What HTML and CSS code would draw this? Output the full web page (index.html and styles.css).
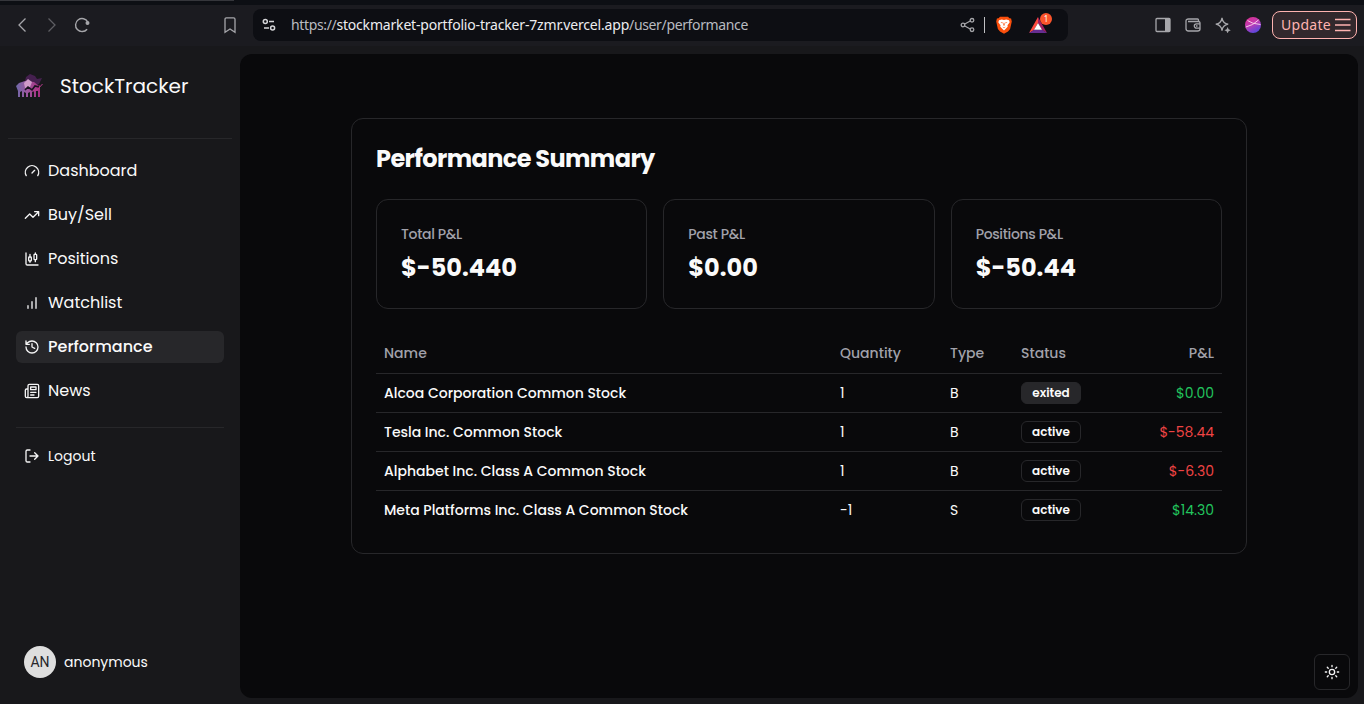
FILE: index.html
```
<!DOCTYPE html>
<html lang="en">
<head>
<meta charset="utf-8">
<title>StockTracker</title>
<link rel="stylesheet" href="styles.css">
</head>
<body>
<div class="tabstrip"><div class="tabstrip-line"></div></div>
<header class="toolbar">
  <div class="nav-tools">
    <svg class="back" width="16" height="18" viewBox="0 0 16 18"><path d="M11.500 2.500 5 9l6.500 6.500"/></svg>
    <svg class="forward" width="16" height="18" viewBox="0 0 16 18"><path d="M4.500 2.500 11 9l-6.500 6.500"/></svg>
    <svg class="reload" width="18" height="18" viewBox="0 0 18 18"><path d="M13.100 13.200A6.500 6.500 0 1 1 13.800 6"/><circle cx="13.500" cy="7" r="1.300"/></svg>
    <svg class="bookmark" width="14" height="18" viewBox="0 0 14 18"><path d="M2 3.200Q2 1.800 3.400 1.800h7.200Q12 1.800 12 3.200v13L7 13l-5 3.200z"/></svg>
  </div>
  <div class="address">
    <svg class="tune" width="14" height="14" viewBox="0 0 14 14"><circle cx="3.300" cy="3.500" r="2"/><path d="M7 3.500h5M2 10h5"/><circle cx="10.600" cy="10" r="2"/></svg>
    <span class="url">https://<b>stockmarket-portfolio-tracker-7zmr.vercel.app</b>/user/performance</span>
    <svg class="share" width="16" height="16" viewBox="0 0 16 16"><path d="m4.800 7 5.400-3M4.800 9l5.400 3"/><circle cx="3" cy="8" r="1.800"/><circle cx="12" cy="3.300" r="1.800"/><circle cx="12" cy="12.700" r="1.800"/></svg>
    <i class="divider"></i>
    <svg class="brave" width="16" height="18" viewBox="0 0 16 18"><path fill="#fb4f0c" d="M4 .8h8l1.400 1.500 1.700.2.700 3-1.700 7.500-2.100 2.500L8 17.800l-4-2.300L1.900 13 .2 5.500l.7-3 1.700-.2z"/><path fill="#fff" d="m3 4.300 2.700-.8L8 4l2.300-.5 2.700.8.700 2-2.200 3 .2 1.500L8 14.500 4.300 10.800l.2-1.500-2.200-3z"/><path fill="#fb4f0c" d="m4.500 6.100 2.300.4-.5.900zM11.500 6.100l-2.300.4.500.9zM7.600 6.800h.8l.3 2.200-.7.900-.7-.9zM6 10.600l2 .9 2-.9-2 1.700z"/></svg>
    <div class="rewards">
      <svg width="18" height="16" viewBox="0 0 18 16"><path fill="#ff4b3e" d="M9 0 0 16l5-3 4-7z"/><path fill="#9e1f63" d="m9 0 9 16-5-3-4-7z"/><path fill="#662d91" d="M0 16h18l-5-3.200H5z"/><path fill="#fff" d="m9 6 4 6.800H5z"/></svg>
      <span class="count">1</span>
    </div>
  </div>
  <div class="right-tools">
    <svg width="16" height="16" viewBox="0 0 16 16"><rect x="1" y="1.500" width="14" height="13" rx="1"/><path class="solid" d="M10 1.500h5v13h-5z"/></svg>
    <svg width="16" height="16" viewBox="0 0 16 16"><path d="M13.500 4.500V3q0-1-1-1h-9Q1 2 1 4v7.500Q1 14 3.500 14h9q2.500 0 2.500-2V6q0-1.500-1.500-1.500H3M15 6.800h-3.500a2.200 2.200 0 0 0 0 4.400H15M11 9h1.500"/></svg>
    <svg width="16" height="16" viewBox="0 0 16 16"><path d="M7 .8c.5 3.900 2.200 5.700 6.200 6.400C9.200 7.900 7.500 9.700 7 13.600 6.500 9.700 4.800 7.900.8 7.200 4.800 6.500 6.500 4.700 7 .8z"/><path class="solid" d="m12.600 10 1 2.200 2.200 1-2.200 1-1 2.200-1-2.200-2.200-1 2.200-1z"/></svg>
    <svg class="profile" width="16" height="16" viewBox="0 0 16 16"><defs><linearGradient id="orb" x1=".2" y1="0" x2=".7" y2="1"><stop offset="0" stop-color="#d9308f"/><stop offset=".45" stop-color="#c13bb4"/><stop offset="1" stop-color="#5148e0"/></linearGradient></defs><circle cx="8" cy="8" r="8" fill="url(#orb)"/><path d="M2.500 3.500Q7 7 15.500 7.500M.8 10Q8 8.500 13.500 3"/></svg>
    <div class="update"><span>Update</span><svg width="16" height="14" viewBox="0 0 16 14"><path d="M0 1.500h15.500M0 7h15.500M0 12.500h15.500"/></svg></div>
  </div>
</header>
<div class="app">
  <aside class="sidebar">
    <div class="brand">
      <svg width="28" height="26" viewBox="0 0 28 26"><defs><linearGradient id="bull"><stop offset="0" stop-color="#6e69a8"/><stop offset=".5" stop-color="#a0559e"/><stop offset="1" stop-color="#a52c7e"/></linearGradient></defs><path fill="#45204f" d="m9 8 1-4 4-3 5 2 2 3 5-1-3 6-6 3z"/><path fill="url(#bull)" d="m0 13 3-3 6-2 9 1 5 4 1-1v12h-2v-6h-2v6h-2v-6l-2 1v5h-2v-5l-2 1v4h-2v-4l-2-1v5H6v-6l-2 1v5H2v-6z"/><path fill="#d09bc9" d="m8 10 4-4 4 3-2 5-5 1z"/><path stroke="#191320" stroke-width="1.600" fill="none" d="m9 17 3-3 4 3 3-4 4 1"/><path stroke="#b73c8c" fill="none" d="m17 18 4-1 5.500-6"/></svg>
      <span>StockTracker</span>
    </div>
    <nav class="menu">
      <a class="item"><svg viewBox="0 0 24 24"><path d="m12 15 4-4M3.340 19a10 10 0 1 1 17.320 0"/></svg><span>Dashboard</span></a>
      <a class="item"><svg viewBox="0 0 24 24"><path d="m22 7-8.500 8.500-5-5L2 17M16 7h6v6"/></svg><span>Buy/Sell</span></a>
      <a class="item"><svg viewBox="0 0 24 24"><path d="M9 5v4M9 15v2M17 3v2M17 13v3M3 3v16a2 2 0 0 0 2 2h16"/><rect x="7" y="9" width="4" height="6" rx="1"/><rect x="15" y="5" width="4" height="8" rx="1"/></svg><span>Positions</span></a>
      <a class="item"><svg viewBox="0 0 24 24"><path d="M6 20v-4M12 20V10M18 20V4"/></svg><span>Watchlist</span></a>
      <a class="item active"><svg viewBox="0 0 24 24"><path d="M3 12a9 9 0 1 0 9-9 9.750 9.750 0 0 0-6.740 2.740L3 8M3 3v5h5M12 7v5l4 2"/></svg><span>Performance</span></a>
      <a class="item"><svg viewBox="0 0 24 24"><path d="M4 22h16a2 2 0 0 0 2-2V4a2 2 0 0 0-2-2H8a2 2 0 0 0-2 2v16a2 2 0 0 1-4 0v-9c0-1.100.9-2 2-2h2M18 14h-8M15 18h-5M10 6h8v4h-8z"/></svg><span>News</span></a>
    </nav>
    <div class="logout"><svg viewBox="0 0 24 24"><path d="M9 21H5a2 2 0 0 1-2-2V5a2 2 0 0 1 2-2h4M16 17l5-5-5-5M21 12H9"/></svg><span>Logout</span></div>
    <div class="user"><span class="avatar">AN</span><span class="username">anonymous</span></div>
  </aside>
  <main class="content">
    <section class="summary">
      <h1>Performance Summary</h1>
      <div class="cards">
        <div class="card"><p>Total P&amp;L</p><strong>$-50.440</strong></div>
        <div class="card"><p>Past P&amp;L</p><strong>$0.00</strong></div>
        <div class="card"><p>Positions P&amp;L</p><strong>$-50.44</strong></div>
      </div>
      <div class="table">
        <div class="row head"><span>Name</span><span>Quantity</span><span>Type</span><span>Status</span><span>P&amp;L</span></div>
        <div class="row"><span>Alcoa Corporation Common Stock</span><span>1</span><span>B</span><span><em class="badge exited">exited</em></span><span class="gain">$0.00</span></div>
        <div class="row"><span>Tesla Inc. Common Stock</span><span>1</span><span>B</span><span><em class="badge">active</em></span><span class="loss">$-58.44</span></div>
        <div class="row"><span>Alphabet Inc. Class A Common Stock</span><span>1</span><span>B</span><span><em class="badge">active</em></span><span class="loss">$-6.30</span></div>
        <div class="row"><span>Meta Platforms Inc. Class A Common Stock</span><span>-1</span><span>S</span><span><em class="badge">active</em></span><span class="gain">$14.30</span></div>
      </div>
    </section>
    <button class="theme" aria-label="Toggle theme"><svg viewBox="0 0 24 24"><circle cx="12" cy="12" r="4"/><path d="M12 2v2M12 20v2M4.930 4.930l1.410 1.410M17.660 17.660l1.410 1.410M2 12h2M20 12h2M6.340 17.660l-1.410 1.410M19.070 4.930l-1.410 1.410"/></svg></button>
  </main>
</div>
</body>
</html>
```

FILE: styles.css
```
* { box-sizing: border-box; }
body {
  margin: 0;
  width: 1364px;
  height: 704px;
  overflow: hidden;
  display: flex;
  flex-direction: column;
  background: #18181b;
  color: #fafafa;
  font-family: Poppins, Inter, sans-serif;
}
svg { flex: none; fill: none; stroke: none; }
h1, p { margin: 0; }

.tabstrip { height: 5px; background: #0d0f14; }
.tabstrip-line { width: 234px; height: 1px; background: #35363b; }

.toolbar {
  height: 41px;
  display: flex;
  align-items: center;
  background: #1b1b20;
  padding: 0 7px 2px 14px;
}
.toolbar svg { stroke: #a6a6aa; stroke-width: 1.3; }
.nav-tools { width: 239px; display: flex; align-items: center; }
.nav-tools .forward { margin-left: 14px; stroke: #5e5e63; }
.nav-tools .reload { margin-left: 14px; stroke-width: 1.4; }
.nav-tools .reload circle { fill: #a6a6aa; }
.nav-tools .bookmark { margin-left: 131px; }
.address {
  width: 815px;
  height: 32px;
  border-radius: 8px;
  background: #0d0e13;
  display: flex;
  align-items: center;
  padding: 0 21px 0 9px;
}
.address .tune { stroke: #d6d6d9; stroke-width: 1.5; }
.url {
  flex: 1;
  margin-left: 15px;
  font: 14px "Noto Sans", sans-serif;
  letter-spacing: -0.36px;
  color: #b9bbc0;
  white-space: nowrap;
}
.url b { font-weight: 400; color: #ececef; letter-spacing: -0.18px; }
.divider { width: 1px; height: 16px; background: #c0c0c3; margin: 0 11px 0 8px; }
.toolbar .brave, .toolbar .rewards svg { stroke: none; }
.rewards { position: relative; margin-left: 17px; display: flex; }
.count {
  position: absolute;
  left: 11px;
  top: -4px;
  width: 12px;
  height: 12px;
  border-radius: 6px;
  background: #fb542b;
  color: #fff;
  font: 8px/12px "Noto Sans", sans-serif;
  text-align: center;
}
.right-tools { flex: 1; display: flex; align-items: center; justify-content: flex-end; gap: 14px; }
.toolbar .right-tools .solid { fill: #a6a6aa; stroke: none; }
.toolbar .right-tools .profile { stroke: #f6c6e8; stroke-width: 1; }
.toolbar .profile circle { stroke: none; }
.update {
  width: 85px;
  height: 28px;
  margin-left: -3px;
  border: 1px solid #ffb3b0;
  border-radius: 8px;
  background: #32282c;
  color: #ffb3b0;
  display: flex;
  align-items: center;
  justify-content: space-between;
  padding: 0 5px 0 8px;
  font: 14px "Noto Sans", sans-serif;
  letter-spacing: 0.3px;
}
.toolbar .update svg { stroke: #ffb3b0; }

.app { flex: 1; display: flex; padding: 8px 6px 6px 0; }
.sidebar { width: 240px; display: flex; flex-direction: column; padding: 0 8px 12px; }
.brand {
  height: 85px;
  border-bottom: 1px solid #27272a;
  display: flex;
  align-items: flex-start;
  padding: 17px 0 0 8px;
  gap: 16px;
}
.brand svg { margin-top: 2px; }
.brand span { font-size: 20px; line-height: 30px; }
.menu {
  margin: 0 8px;
  padding: 16px 0 20px;
  border-bottom: 1px solid #27272a;
  display: flex;
  flex-direction: column;
  gap: 12px;
}
.item, .logout { height: 32px; display: flex; align-items: center; gap: 8px; padding-left: 8px; border-radius: 6px; font-size: 16px; }
.item span { line-height: 24px; }
.item svg, .logout svg, .theme svg { width: 16px; height: 16px; stroke: #f4f4f5; stroke-width: 2; stroke-linecap: round; stroke-linejoin: round; }
.item.active { background: #27272a; font-weight: 500; }
.logout { margin: 12px 8px 0; font-size: 14px; }
.user { margin-top: auto; padding: 8px 16px; display: flex; align-items: center; gap: 8px; font-size: 14px; }
.avatar {
  width: 32px;
  height: 32px;
  border-radius: 50%;
  background: #dedede;
  color: #27272a;
  display: flex;
  align-items: center;
  justify-content: center;
  font: 14px Roboto, sans-serif;
}

.content { flex: 1; position: relative; background: #09090b; border-radius: 12px; padding: 64px 111px 0; }
.summary { height: 436px; border: 1px solid #27272a; border-radius: 12px; padding: 24px; }
h1 { font-size: 24px; line-height: 32px; font-weight: 700; letter-spacing: -0.6px; }
.cards { margin-top: 24px; display: grid; grid-template-columns: repeat(3, 1fr); gap: 16px; }
.card { height: 110px; border: 1px solid #27272a; border-radius: 12px; padding: 24px; }
.card p { font-size: 14px; line-height: 20px; font-weight: 500; letter-spacing: -0.35px; color: #a1a1aa; }
.card strong { display: block; margin-top: 8px; font-size: 24px; line-height: 32px; }
.table { margin-top: 24px; font-size: 14px; }
.row {
  height: 39px;
  display: grid;
  grid-template-columns: 456px 110px 71px 1fr 110px;
  align-items: center;
  padding: 0 8px;
  border-bottom: 1px solid #27272a;
}
.row:last-child { height: 38px; border-bottom: 0; }
.row span:first-child { font-weight: 500; }
.row span:last-child { text-align: right; }
.head { height: 41px; color: #a1a1aa; font-weight: 500; }
.badge {
  display: block;
  width: 60px;
  height: 22px;
  border: 1px solid #27272a;
  border-radius: 6px;
  font: 600 12px/20px Poppins, Inter, sans-serif;
  text-align: center;
}
.exited { background: #27272a; }
.gain { color: #22c55e; }
.loss { color: #ef4444; }
.theme {
  position: absolute;
  right: 8px;
  bottom: 8px;
  width: 36px;
  height: 36px;
  border: 1px solid #27272a;
  border-radius: 6px;
  background: #09090b;
  display: flex;
  align-items: center;
  justify-content: center;
  padding: 0;
}
```
